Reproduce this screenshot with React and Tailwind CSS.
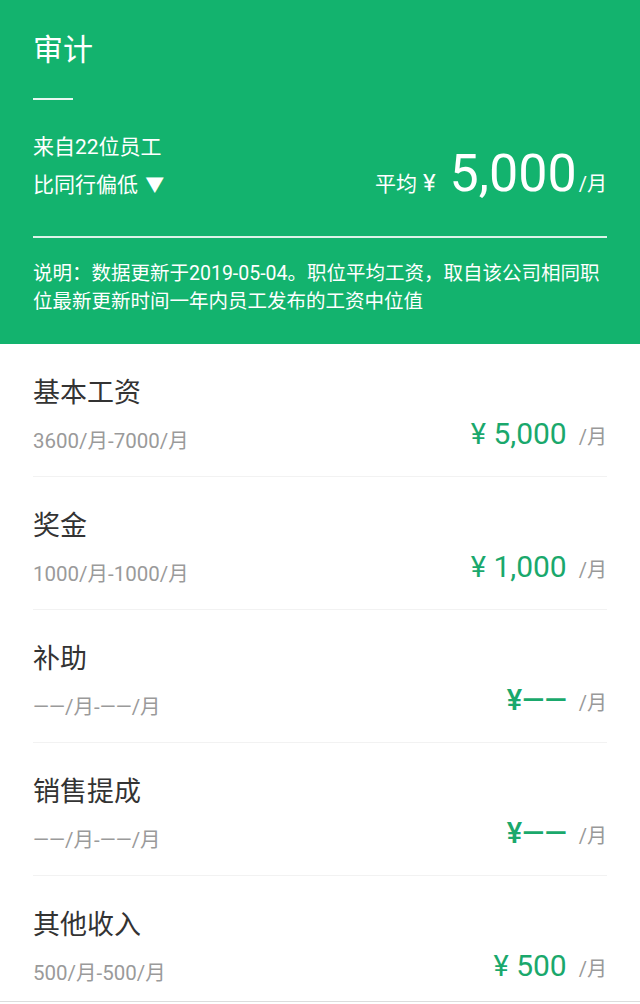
const font = { fontFamily: "Roboto, 'Noto Sans CJK SC', sans-serif" };

const items = [
  { name: "基本工资", range: "3600/月-7000/月", value: "5,000", empty: false },
  { name: "奖金", range: "1000/月-1000/月", value: "1,000", empty: false },
  { name: "补助", range: "——/月-——/月", value: "", empty: true },
  { name: "销售提成", range: "——/月-——/月", value: "", empty: true },
  { name: "其他收入", range: "500/月-500/月", value: "500", empty: false },
];

function Header() {
  return (
    <div className="bg-[#13b36e] text-white px-[33px] pt-[30px] pb-[28px]">
      <div className="text-[30px] leading-[40px]">审计</div>
      <div className="mt-[28px] h-[2px] w-[40px] bg-white/90" />
      <div className="mt-[32px] flex items-end justify-between">
        <div>
          <div className="text-[21px] leading-[30px]">来自22位员工</div>
          <div className="mt-[8px] text-[21px] leading-[30px]">
            比同行偏低 <span className="ml-[2px] text-[19px]">▼</span>
          </div>
        </div>
        <div className="flex items-baseline">
          <span className="text-[21px]">平均</span>
          <span className="ml-[6px] text-[24px]">¥</span>
          <span className="ml-[14px] text-[52px] leading-none">5,000</span>
          <span className="ml-[2px] text-[20px]">/月</span>
        </div>
      </div>
      <div className="mt-[35px] h-[2px] bg-white/85" />
      <p className="mt-[22px] text-[19.5px] leading-[28px] whitespace-nowrap">
        说明：数据更新于2019-05-04。职位平均工资，取自该公司相同职
        <br />
        位最新更新时间一年内员工发布的工资中位值
      </p>
    </div>
  );
}

function Row({ item, last }) {
  return (
    <div className={last ? "border-b border-[#dcdcdc]" : ""}>
      <div
        className={
          "mx-[33px] pt-[31px] flex items-end justify-between " +
          (last ? "pb-[14px]" : "pb-[21px] border-b border-[#f2f2f2]")
        }
      >
        <div>
          <div className="text-[27px] leading-[36px] text-[#333]">{item.name}</div>
          <div className="mt-[16px] text-[20.5px] leading-[28px] text-[#9a9a9a]">{item.range}</div>
        </div>
        <div className="mb-[3px] flex items-baseline">
          {item.empty ? (
            <span className="text-[29px] leading-none text-[#1aa86c] font-medium">¥——</span>
          ) : (
            <span className="text-[30px] leading-none text-[#1aa86c]">
              <span className="text-[29px]">¥</span> {item.value}
            </span>
          )}
          <span className="ml-[12px] text-[20px] text-[#999]">/月</span>
        </div>
      </div>
    </div>
  );
}

export default function App() {
  return (
    <div className="w-[640px] h-[1004px] overflow-hidden bg-white" style={font}>
      <Header />
      {items.map((item, i) => (
        <Row key={item.name} item={item} last={i === items.length - 1} />
      ))}
    </div>
  );
}
